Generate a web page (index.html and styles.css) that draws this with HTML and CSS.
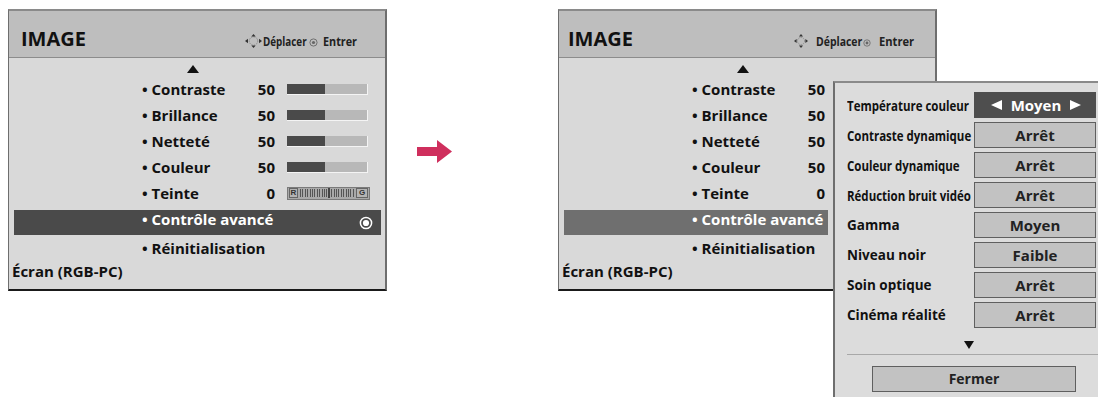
FILE: index.html
```html
<!DOCTYPE html>
<html lang="fr">
<head>
    <meta charset="UTF-8">
    <title>Image - Contrôle avancé</title>
    <link rel="stylesheet" href="styles.css">
</head>
<body>
    <div class="stage">
        <!-- Menu before -->
        <div class="menu">
            <div class="menu-head">
                <span class="menu-title">IMAGE</span>
                <span class="menu-help">
                    <svg class="icon-nav" width="17" height="14" viewBox="0 0 17 14">
                        <circle cx="8.5" cy="7" r="4.2" fill="none" stroke="#8a8a8a" stroke-width="1" stroke-dasharray="1.4 1"/>
                        <polygon points="0,7 3,4.8 3,9.2" fill="#333"/>
                        <polygon points="17,7 14,4.8 14,9.2" fill="#333"/>
                        <polygon points="8.5,0 6.3,2.6 10.7,2.6" fill="#333"/>
                        <polygon points="8.5,14 6.3,11.4 10.7,11.4" fill="#333"/>
                    </svg><span class="help-move">Déplacer</span><svg class="icon-enter" width="9" height="9" viewBox="0 0 9 9">
                        <circle cx="4.5" cy="4.5" r="3.6" fill="none" stroke="#666" stroke-width="0.9"/>
                        <circle cx="4.5" cy="4.5" r="1.6" fill="#666"/>
                    </svg><span class="help-enter">Entrer</span>
                </span>
            </div>
            <div class="menu-body">
                <div class="scroll-up">
                    <svg width="12" height="8" viewBox="0 0 12 8"><polygon points="6,0 12,8 0,8" fill="#111"/></svg>
                </div>
                <ul class="items">
                    <li class="item"><span class="item-name">• Contraste</span><span class="item-value">50</span><span class="bar"><span class="bar-fill" style="width: 48%"></span></span></li>
                    <li class="item"><span class="item-name">• Brillance</span><span class="item-value">50</span><span class="bar"><span class="bar-fill" style="width: 48%"></span></span></li>
                    <li class="item"><span class="item-name">• Netteté</span><span class="item-value">50</span><span class="bar"><span class="bar-fill" style="width: 48%"></span></span></li>
                    <li class="item"><span class="item-name">• Couleur</span><span class="item-value">50</span><span class="bar"><span class="bar-fill" style="width: 48%"></span></span></li>
                    <li class="item"><span class="item-name">• Teinte</span><span class="item-value">0</span><span class="tint"><b class="tint-end">R</b><span class="tint-scale"></span><b class="tint-end">G</b></span></li>
                    <li class="item item-active"><span class="item-name">• Contrôle avancé</span>
                        <svg class="icon-radio" width="14" height="14" viewBox="0 0 14 14">
                            <circle cx="7" cy="7" r="5.6" fill="none" stroke="#fff" stroke-width="1.5"/>
                            <circle cx="7" cy="7" r="3.1" fill="#fff"/>
                        </svg>
                    </li>
                    <li class="item"><span class="item-name">• Réinitialisation</span></li>
                </ul>
                <div class="source">Écran (RGB-PC)</div>
            </div>
        </div>

        <svg class="step-arrow" width="35" height="23" viewBox="0 0 35 23">
            <polygon points="0,7 20,7 20,0 35,11.5 20,23 20,16 0,16" fill="#cf2f5d"/>
        </svg>

        <!-- Menu after -->
        <div class="menu menu-alt">
            <div class="menu-head">
                <span class="menu-title">IMAGE</span>
                <span class="menu-help">
                    <svg class="icon-nav" width="14" height="14" viewBox="0 0 14 14">
                        <circle cx="7" cy="7" r="3.6" fill="none" stroke="#8a8a8a" stroke-width="1" stroke-dasharray="1.3 1"/>
                        <polygon points="0,7 2.6,5 2.6,9" fill="#333"/>
                        <polygon points="14,7 11.4,5 11.4,9" fill="#333"/>
                        <polygon points="7,0 5,2.4 9,2.4" fill="#333"/>
                        <polygon points="7,14 5,11.6 9,11.6" fill="#333"/>
                    </svg><span class="help-move">Déplacer</span><svg class="icon-enter" width="8" height="8" viewBox="0 0 9 9">
                        <circle cx="4.5" cy="4.5" r="3.6" fill="none" stroke="#666" stroke-width="0.9"/>
                        <circle cx="4.5" cy="4.5" r="1.6" fill="#666"/>
                    </svg><span class="help-enter">Entrer</span>
                </span>
            </div>
            <div class="menu-body">
                <div class="scroll-up">
                    <svg width="12" height="8" viewBox="0 0 12 8"><polygon points="6,0 12,8 0,8" fill="#111"/></svg>
                </div>
                <ul class="items">
                    <li class="item"><span class="item-name">• Contraste</span><span class="item-value">50</span></li>
                    <li class="item"><span class="item-name">• Brillance</span><span class="item-value">50</span></li>
                    <li class="item"><span class="item-name">• Netteté</span><span class="item-value">50</span></li>
                    <li class="item"><span class="item-name">• Couleur</span><span class="item-value">50</span></li>
                    <li class="item"><span class="item-name">• Teinte</span><span class="item-value">0</span></li>
                    <li class="item item-active"><span class="item-name">• Contrôle avancé</span></li>
                    <li class="item"><span class="item-name">• Réinitialisation</span></li>
                </ul>
                <div class="source">Écran (RGB-PC)</div>
            </div>

            <div class="popup">
                <div class="option">
                    <span class="option-label narrow">Température couleur</span>
                    <span class="option-value option-selected">
                        <svg width="11" height="10" viewBox="0 0 11 10"><polygon points="0,5 11,0 11,10" fill="#fff"/></svg>
                        <span>Moyen</span>
                        <svg width="11" height="10" viewBox="0 0 11 10"><polygon points="11,5 0,0 0,10" fill="#fff"/></svg>
                    </span>
                </div>
                <div class="option">
                    <span class="option-label narrow">Contraste dynamique</span>
                    <span class="option-value">Arrêt</span>
                </div>
                <div class="option">
                    <span class="option-label narrow">Couleur dynamique</span>
                    <span class="option-value">Arrêt</span>
                </div>
                <div class="option">
                    <span class="option-label narrow">Réduction bruit vidéo</span>
                    <span class="option-value">Arrêt</span>
                </div>
                <div class="option">
                    <span class="option-label">Gamma</span>
                    <span class="option-value">Moyen</span>
                </div>
                <div class="option">
                    <span class="option-label">Niveau noir</span>
                    <span class="option-value">Faible</span>
                </div>
                <div class="option">
                    <span class="option-label">Soin optique</span>
                    <span class="option-value">Arrêt</span>
                </div>
                <div class="option">
                    <span class="option-label">Cinéma réalité</span>
                    <span class="option-value">Arrêt</span>
                </div>
                <div class="scroll-down">
                    <svg width="10" height="8" viewBox="0 0 10 8"><polygon points="0,0 10,0 5,8" fill="#111"/></svg>
                </div>
                <div class="popup-foot">
                    <span class="close-btn">Fermer</span>
                </div>
            </div>
        </div>
    </div>
</body>
</html>
```

FILE: styles.css
```css
html, body {
    margin: 0;
    padding: 0;
    overflow: hidden;
}
body {
    width: 1098px;
    height: 397px;
    background-color: #FFFFFF;
    font-family: "Open Sans", "Liberation Sans", sans-serif;
    color: #141414;
}
.stage {
    display: flex;
    align-items: flex-start;
    padding: 9px 0 0 8px;
}

/* OSD menu */
.menu {
    position: relative;
    width: 379px;
    box-sizing: border-box;
    border-top: 2px solid #8a8a8a;
    border-left: 1px solid #6e6e6e;
    border-right: 2px solid #6e6e6e;
    border-bottom: 2px solid #1a1a1a;
    background-color: #D9D9D9;
}
.menu-head {
    display: flex;
    align-items: baseline;
    justify-content: space-between;
    box-sizing: border-box;
    height: 47px;
    padding: 18px 29px 0 12px;
    background-color: #BEBEBE;
    border-bottom: 1px solid #8c8c8c;
}
.menu-title {
    font-size: 20px;
    line-height: 20px;
    font-weight: 700;
    color: #111;
}
.menu-help {
    font-size: 12px;
    font-weight: 700;
    color: #222;
    white-space: nowrap;
}
.menu-help svg {
    vertical-align: -2px;
}
/* the remote labels use a condensed face */
.help-move,
.help-enter {
    display: inline-block;
    transform-origin: 0 50%;
}
.help-move {
    width: 53px;
    margin-right: -10px;
    transform: scaleX(0.82);
}
.help-enter {
    width: 37px;
    margin-right: -4px;
    transform: scaleX(0.9);
}
.icon-nav { margin-right: 1px; }
.menu-help .icon-enter { margin: 0 5px 0 3px; vertical-align: -1px; }

.menu-body {
    padding-bottom: 9px;
}
.scroll-up {
    height: 18px;
    box-sizing: border-box;
    padding: 7px 0 0 178px;
    line-height: 0;
}
.items {
    list-style: none;
    margin: 0;
    padding: 0;
}
.item {
    display: flex;
    align-items: center;
    height: 26px;
    line-height: 26px;
    padding-left: 133px;
    font-size: 15px;
    font-weight: 700;
    color: #111;
    white-space: nowrap;
}
.item-name {
    width: 103px;
}
.item-value {
    width: 30px;
    text-align: right;
}
.bar {
    display: flex;
    width: 81px;
    height: 11px;
    margin-left: 12px;
    box-sizing: border-box;
    background-color: #B8B8B8;
    border-right: 1px solid #F4F4F4;
    border-bottom: 1px solid #F4F4F4;
}
.bar-fill {
    height: 100%;
    background-color: #4A4A4A;
}
.tint {
    display: flex;
    align-items: center;
    width: 83px;
    height: 13px;
    margin-left: 12px;
    box-sizing: border-box;
    padding: 0 1px;
    background-color: #A9A9A9;
    border: 1px solid #7a7a7a;
}
.tint-end {
    width: 9px;
    height: 10px;
    box-sizing: border-box;
    border: 1px solid #666;
    background-color: #B4B4B4;
    font-family: "Liberation Sans", sans-serif;
    font-size: 8px;
    line-height: 8px;
    text-align: center;
    color: #333;
}
.tint-end:last-child { width: 12px; }
.tint-scale {
    position: relative;
    flex: 1;
    height: 8px;
    margin: 0 2px;
    background: repeating-linear-gradient(90deg, #555 0 1px, transparent 1px 2.4px);
}
.tint-scale::after {
    content: "";
    position: absolute;
    left: 28px;
    top: -1px;
    width: 2px;
    height: 10px;
    background-color: #444;
}
.item-active {
    height: 25px;
    line-height: 18px;
    align-items: flex-start;
    margin: 4px 4px 0 5px;
    padding-left: 128px;
    background-color: #4A4A4A;
    color: #FFFFFF;
}
.icon-radio {
    align-self: center;
    margin-left: auto;
    margin-right: 8px;
}
.source {
    padding: 1px 0 0 3px;
    font-size: 15px;
    font-weight: 700;
    line-height: 18px;
    color: #111;
}

.step-arrow {
    margin: 131px 0 0 30px;
}

/* Menu with open sub-menu */
.menu-alt {
    margin-left: 106px;
}
.menu-alt .menu-head {
    padding: 18px 22px 0 9px;
}
.menu-alt .icon-nav { margin-right: 8px; }
.menu-alt .help-move {
    margin-right: -7px;
    transform: scaleX(0.87);
}
.menu-alt .help-enter {
    margin-right: -3px;
    transform: scaleX(0.93);
}
.menu-alt .menu-help .icon-enter { margin: 0 8px 0 1px; }
.menu-alt .item-active {
    margin-right: 107px;
    background-color: #6F6F6F;
}

.popup {
    position: absolute;
    left: 274px;
    top: 70px;
    width: 266px;
    height: 330px;
    box-sizing: border-box;
    padding: 9px 0 0 12px;
    background-color: #DCDCDC;
    border-top: 2px solid #8a8a8a;
    border-left: 2px solid #6e6e6e;
}
.option {
    display: grid;
    grid-template-columns: 127px 122px;
    align-items: center;
    height: 26px;
    margin-bottom: 4px;
}
.option-label {
    font-size: 13.5px;
    font-weight: 700;
    color: #111;
    white-space: nowrap;
}
.option-label.narrow {
    font-size: 14px;
    transform: scaleX(0.82);
    transform-origin: 0 50%;
}
.option-value {
    height: 26px;
    box-sizing: border-box;
    border: 1px solid #5f5f5f;
    background-color: #C2C2C2;
    font-size: 15px;
    font-weight: 700;
    line-height: 24px;
    text-align: center;
    color: #222;
}
.option-selected {
    display: flex;
    align-items: center;
    justify-content: space-between;
    padding: 0 14px 0 16px;
    background-color: #4E4E4E;
    border-color: #4E4E4E;
    color: #FFFFFF;
}
.scroll-down {
    height: 22px;
    box-sizing: border-box;
    padding: 9px 0 0 117px;
    line-height: 0;
}
.popup-foot {
    border-top: 1px solid #A8A8A8;
    padding: 11px 0 0 25px;
}
.close-btn {
    display: block;
    width: 204px;
    height: 26px;
    box-sizing: border-box;
    border: 1px solid #5f5f5f;
    background-color: #C2C2C2;
    font-size: 14px;
    font-weight: 700;
    line-height: 24px;
    text-align: center;
    color: #222;
}
```
